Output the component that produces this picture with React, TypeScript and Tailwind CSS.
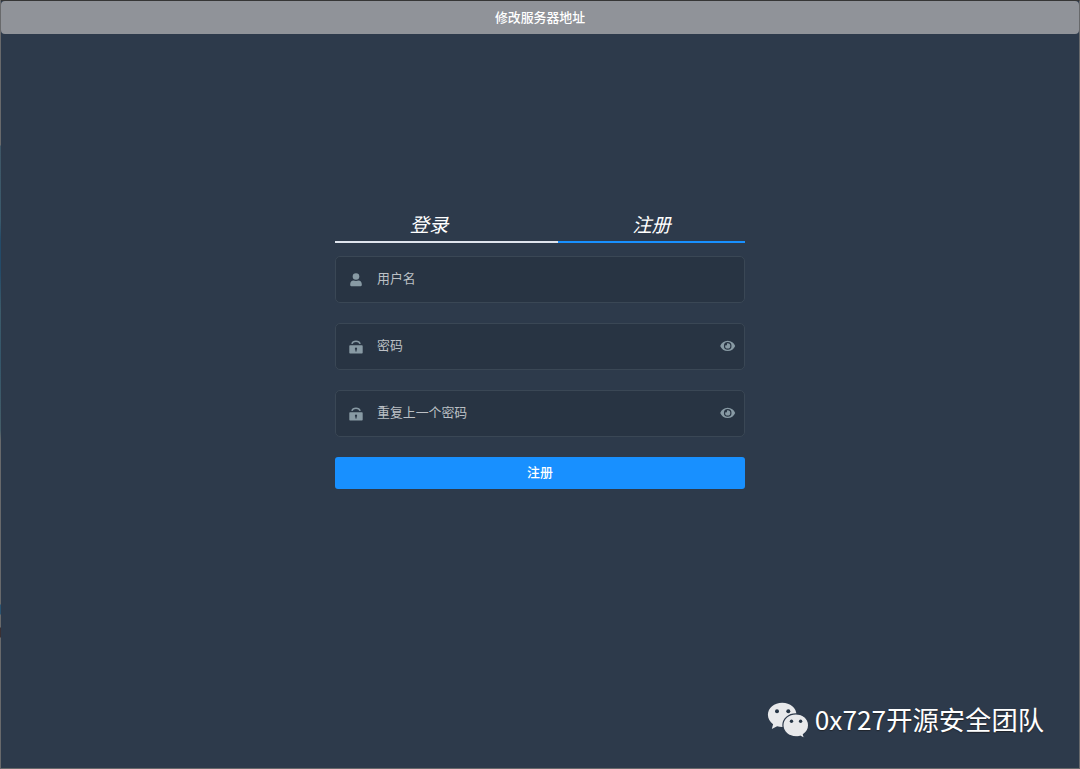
import React from 'react';

function UserIcon() {
  return (
    <svg className="h-[14px] w-[14px]" viewBox="0 0 14 14" fill="currentColor">
      <circle cx="7" cy="3.5" r="3.3" />
      <path d="M1.200 12.100v-.9c0-2.100 1.400-3.600 3.300-3.600.8.3 1.600.5 2.500.5s1.700-.2 2.500-.5c1.900 0 3.300 1.500 3.300 3.600v.9c0 .7-.4 1.100-1.100 1.100H2.300c-.7 0-1.100-.4-1.100-1.100z" />
    </svg>
  );
}

function LockIcon() {
  return (
    <svg className="h-[14px] w-[14px]" viewBox="0 0 14 14" fill="currentColor">
      <path d="M2.900 3.900C3.400 2.100 4.900 1.200 7 1.200s3.600.9 4.100 2.700" fill="none" stroke="currentColor" strokeWidth="1.500" />
      <path
        fillRule="evenodd"
        d="M1.300 5.200h11.400c.6 0 1 .4 1 1v6.300c0 .7-.4 1.100-1 1.100H1.300c-.6 0-1-.4-1-1.100V6.200c0-.6.4-1 1-1zM7 7.600a1.200 1.200 0 0 0-.6 2.200v1.600h1.200V9.800A1.200 1.200 0 0 0 7 7.600z"
      />
    </svg>
  );
}

function EyeIcon() {
  return (
    <svg className="h-[12px] w-[16px]" viewBox="0 0 16 12" fill="currentColor">
      <path
        fillRule="evenodd"
        d="M7.700.7c3.600 0 6.200 2.200 7.500 5.200-1.300 3-3.900 5.200-7.500 5.200S1.500 8.900.2 5.900C1.500 2.900 4.100.7 7.700.7zm0 1.400a3.800 3.800 0 1 0 0 7.600 3.800 3.800 0 0 0 0-7.600z"
      />
      <path d="M7.700 3.300A2.600 2.600 0 1 1 5.100 5.900c0-.2 0-.4.1-.6 1.100.6 2-.2 1.800-1.900.2-.1.500-.1.700-.1z" />
    </svg>
  );
}

function WeChatIcon() {
  return (
    <svg className="h-[37px] w-[42px]" viewBox="0 0 42 37">
      <path
        fill="#e8e9eb"
        d="M15.200.700C7.200.700.900 6 .900 12.800c0 3.900 2 7.200 5.200 9.500l-1.300 4.600 5.300-2.700c1.600.5 3.300.700 5.100.700 8 0 14.300-5.300 14.300-12.100S23.200.700 15.200.700z"
      />
      <path
        fill="#e8e9eb"
        stroke="#2d3a4b"
        strokeWidth="1.200"
        d="M28.900 11.900c-7.300 0-13 4.900-13 11.400s5.700 11.500 13 11.500c1.500 0 2.900-.2 4.200-.6l4.500 2.300-1.200-4c3.200-2.100 5.200-5.300 5.200-9.200 0-6.500-5.400-11.400-12.700-11.400z"
      />
      <g fill="#263545">
        <circle cx="10" cy="9.300" r="2" />
        <circle cx="21.300" cy="9.300" r="2" />
        <circle cx="24.500" cy="19.300" r="1.700" />
        <circle cx="33.600" cy="19.300" r="1.700" />
      </g>
    </svg>
  );
}

interface FieldProps {
  icon: React.ReactNode;
  placeholder: string;
  password?: boolean;
}

function Field({ icon, placeholder, password = false }: FieldProps) {
  return (
    <div className="flex h-[47px] items-center rounded-[5px] border border-[#3a4755] bg-[#283443] pl-[13px] pr-[8px] text-[#889aa4]">
      <span>{icon}</span>
      <input
        type={password ? 'password' : 'text'}
        placeholder={placeholder}
        className="ml-[14px] min-w-0 flex-1 bg-transparent pb-[3px] text-[12.900px] text-white outline-none placeholder:text-[#bcc0c5]"
      />
      {password && (
        <button type="button" aria-label={placeholder} className="pb-px">
          <EyeIcon />
        </button>
      )}
    </div>
  );
}

export default function App() {
  return (
    <div className="flex h-[769px] w-full bg-[#2d3a4b] font-['Noto_Sans_CJK_SC','Noto_Sans',sans-serif] text-white">
      <div className="w-px shrink-0 bg-[linear-gradient(to_bottom,#68696b_0px,#68696b_145px,#3e5666_146px,#3a5a6c_220px,#234a68_240px,#234a68_270px,#3c5b6a_310px,#34566a_360px,#445d68_430px,#68696b_440px,#68696b_604px,#295370_605px,#295370_614px,#68696b_615px,#68696b_627px,#3b3033_628px,#3b3033_637px,#68696b_638px)]" />
      <div className="flex min-w-0 flex-1 flex-col overflow-hidden border-y border-r border-[#68696b] border-t-[#363636]">
        <button type="button" className="h-[33px] w-full shrink-0 rounded-[4px] bg-[#909399] text-[12.900px] font-medium leading-[31px]">
          <span className="block h-[33px]">修改服务器地址</span>
        </button>
        <main className="mx-auto mt-[174px] w-[410px]">
          <nav className="flex h-[35px] text-[19.300px] italic leading-[33px]">
            <button type="button" className="w-[223px] border-b-2 border-[#dfe4ed] pr-[35px]">登录</button>
            <button type="button" className="w-[187px] border-b-2 border-[#1890ff]">注册</button>
          </nav>
          <form className="mt-[13px] flex flex-col gap-[20px]">
            <Field icon={<UserIcon />} placeholder="用户名" />
            <Field icon={<LockIcon />} placeholder="密码" password />
            <Field icon={<LockIcon />} placeholder="重复上一个密码" password />
            <button type="button" className="h-[32px] rounded-[3px] bg-[#1890ff] text-[12.900px] font-medium leading-[30px]">
              <span className="block h-[32px]">注册</span>
            </button>
          </form>
        </main>
        <footer className="mb-[29px] mr-[35px] mt-auto flex items-center justify-end gap-[6px]">
          <WeChatIcon />
          <span className="pb-[3px] text-[26.300px] leading-[34px] [text-shadow:0_1px_1px_#20242b]">0x727开源安全团队</span>
        </footer>
      </div>
    </div>
  );
}
